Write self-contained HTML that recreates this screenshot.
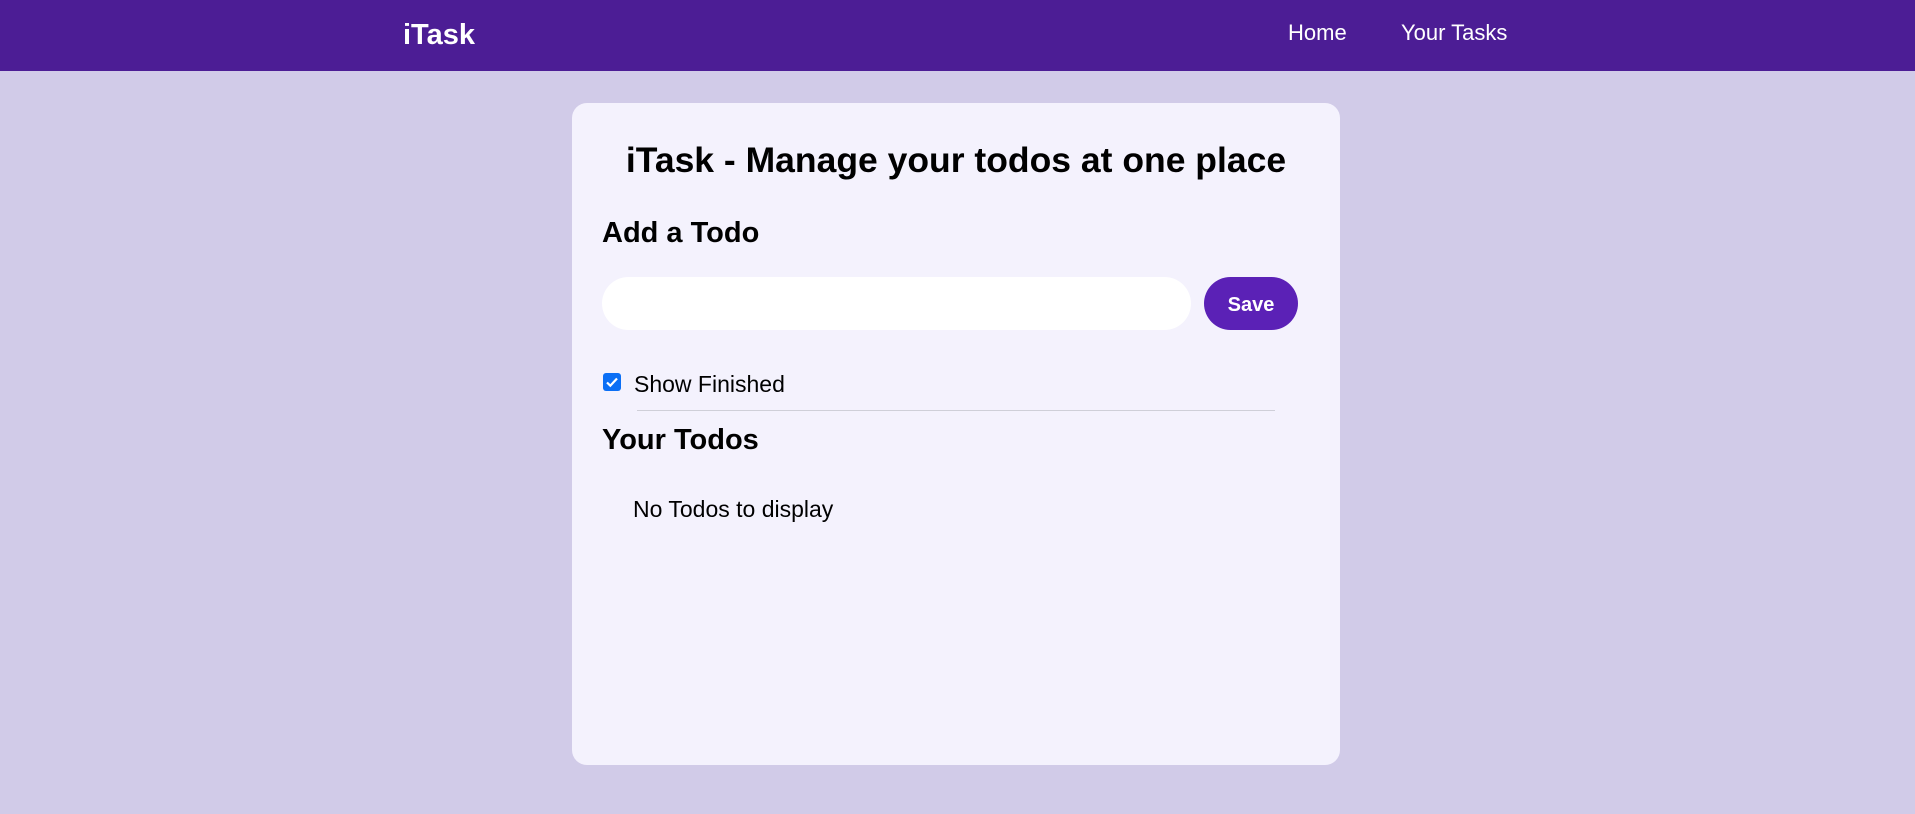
<!DOCTYPE html>
<html><head><meta charset="utf-8"><style>
*{margin:0;padding:0;box-sizing:border-box}
body{width:1915px;height:814px;background:#d1cbe8;font-family:"Liberation Sans",sans-serif;position:relative;overflow:hidden}
nav{position:absolute;left:0;top:0;width:1915px;height:71px;background:#4c1d95;color:#fff}
.logo{position:absolute;left:403px;top:19px;font-size:29px;font-weight:bold}
.l1{position:absolute;left:1288px;top:20px;font-size:22px}
.l2{position:absolute;left:1401px;top:20px;font-size:22px}
.card{position:absolute;left:572px;top:103px;width:768px;height:662px;background:#f4f2fd;border-radius:15px}
.abs{position:absolute;color:#000}
h1{position:absolute;left:0;width:768px;text-align:center;top:37px;font-size:35.5px;font-weight:bold}
.input{position:absolute;left:602px;top:277px;width:589px;height:53px;background:#fff;border-radius:27px}
.btn{position:absolute;left:1204px;top:277px;width:94px;height:53px;background:#5b21b6;border-radius:27px;color:#fff;font-weight:bold;font-size:20px;text-align:center;line-height:57px}
.cb{position:absolute;left:603px;top:373px;width:18px;height:18px;background:#0b6ff5;border-radius:3px}
hr{position:absolute;left:637px;top:410px;width:638px;border:0;border-top:1px solid #cfcfd8}
</style></head><body>
<nav><div class="logo">iTask</div><div class="l1">Home</div><div class="l2">Your Tasks</div></nav>
<div class="card"><h1>iTask - Manage your todos at one place</h1></div>
<div class="abs" style="left:602px;top:217px;font-size:29px;font-weight:bold">Add a Todo</div>
<div class="input"></div>
<div class="btn">Save</div>
<div class="cb"><svg width="18" height="18" viewBox="0 0 18 18"><path d="M4 9.5l3.3 3.2L14 5.5" stroke="#fff" stroke-width="2.2" fill="none"/></svg></div>
<div class="abs" style="left:634px;top:371px;font-size:23px">Show Finished</div>
<hr>
<div class="abs" style="left:602px;top:424px;font-size:29px;font-weight:bold">Your Todos</div>
<div class="abs" style="left:633px;top:496px;font-size:23px">No Todos to display</div>
</body></html>
